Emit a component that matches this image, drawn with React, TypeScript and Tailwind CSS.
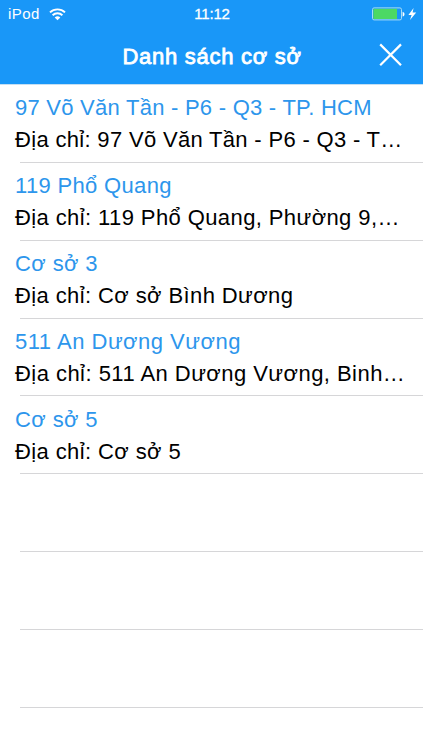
import React from "react";

type Branch = {
  name: string;
  address: string;
  nameClass: string;
  addressClass: string;
};

const branches: Branch[] = [
  {
    name: "97 Võ Văn Tần - P6 - Q3 - TP. HCM",
    address: "97 Võ Văn Tần - P6 - Q3 - T…",
    nameClass: "tracking-[0.25px]",
    addressClass: "tracking-[0.32px]",
  },
  {
    name: "119 Phổ Quang",
    address: "119 Phổ Quang, Phường 9,…",
    nameClass: "tracking-[0.33px]",
    addressClass: "tracking-[0.4px]",
  },
  {
    name: "Cơ sở 3",
    address: "Cơ sở Bình Dương",
    nameClass: "tracking-[0.4px]",
    addressClass: "tracking-[0.4px]",
  },
  {
    name: "511 An Dương Vương",
    address: "511 An Dương Vương, Binh…",
    nameClass: "tracking-[0.5px]",
    addressClass: "tracking-[0.46px]",
  },
  {
    name: "Cơ sở 5",
    address: "Cơ sở 5",
    nameClass: "tracking-[0.4px]",
    addressClass: "tracking-[0.4px]",
  },
];

const emptyRows = [1, 2, 3];

const StatusBar = () => {
  return (
    <div className="grid grid-cols-3 items-center h-7 pl-2 pr-[6px] text-[15px]">
      <div className="flex items-center gap-[9px]">
        <span className="leading-7 tracking-[0.4px]">iPod</span>
        <svg width="17" height="13" viewBox="0 0 17 13" fill="none">
          <path d="M1 4.4a10.8 10.8 0 0 1 15 0" stroke="white" strokeWidth="1.9" />
          <path d="M3.6 7.2a7 7 0 0 1 9.8 0" stroke="white" strokeWidth="1.9" />
          <path d="M8.5 12.2 5.7 9.6a4 4 0 0 1 5.6 0Z" fill="white" />
        </svg>
      </div>
      <span className="text-center leading-7 [-webkit-text-stroke:0.3px_white] pr-px -tracking-[0.2px]">
        11:12
      </span>
      <div className="flex items-center justify-end">
        <svg width="46" height="14" viewBox="0 0 46 14" fill="none">
          <rect x="1.5" y="0.9" width="29" height="12" rx="1.6" stroke="#a9dcf5" />
          <rect x="2.4" y="1.8" width="23.6" height="10.2" fill="#4cd964" />
          <path d="M31.6 4.8c1.3.4 1.9 1.2 1.9 2.4s-.6 2-1.9 2.4Z" fill="white" />
          <path d="M42.6 1 37.4 8h3.2L39 13l6.2-7.4h-3.6Z" fill="white" />
        </svg>
      </div>
    </div>
  );
};

const App = () => {
  return (
    <div className="w-full h-screen overflow-hidden bg-white font-['Liberation_Sans',Arial,sans-serif]">
      <header className="h-[85px] bg-[#1997f8] text-white border-b border-[#c5dff3]">
        <StatusBar />
        <div className="grid grid-cols-[50px_1fr_50px] items-center h-[53px] pr-[7px]">
          <h1 className="col-start-2 pl-[8px] pt-[3px] text-center text-[22px] whitespace-nowrap tracking-[0.72px] [-webkit-text-stroke:0.8px_white]">
            Danh sách cơ sở
          </h1>
          <button className="flex justify-center" aria-label="Đóng">
            <svg width="24" height="24" viewBox="0 0 24 24">
              <path d="M1.2 1.4 22 22.2M22 1.4 1.2 22.2" stroke="white" strokeWidth="2.2" />
            </svg>
          </button>
        </div>
      </header>
      <ul>
        {branches.map((branch) => (
          <li key={branch.name} className="h-[77.85px] pl-5">
            <div className="h-full pt-[7.2px] border-b border-[#d6d6d8] whitespace-nowrap text-[22px] leading-8">
              <p className={`-ml-[5px] text-[#2d96ec] ${branch.nameClass}`}>{branch.name}</p>
              <p className={`-ml-[5px] text-black ${branch.addressClass}`}>
                Địa chỉ: {branch.address}
              </p>
            </div>
          </li>
        ))}
        {emptyRows.map((row) => (
          <li key={row} className="h-[77.85px] pl-5">
            <div className="h-full border-b border-[#d6d6d8]" />
          </li>
        ))}
      </ul>
    </div>
  );
};

export default App;
